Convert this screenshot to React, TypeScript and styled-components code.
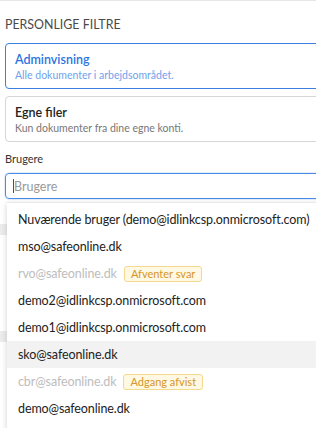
import React from "react";
import styled, { createGlobalStyle } from "styled-components";

const Global = createGlobalStyle`
  html, body { margin: 0; padding: 0; background: #fff; overflow: hidden; }
  body { font-family: "Lato", "Liberation Sans", sans-serif; }
`;

const Page = styled.div`
  position: relative;
  width: 316px;
  height: 428px;
  overflow: hidden;
  border-top: 1px solid #e6e6e6;
  box-sizing: border-box;
`;

const Content = styled.div`
  width: 340px;
  padding: 16px 0 0 5px;
  display: flex;
  flex-direction: column;
`;

const Heading = styled.div`
  font-size: 12.4px;
  color: #4a4a4a;
  height: 16px;
  line-height: 16px;
  margin-bottom: 10px;
`;

const Card = styled.div<{ $active?: boolean }>`
  border: 1px solid ${(p) => (p.$active ? "#3b7fe0" : "#d6d6d6")};
  border-radius: 4px;
  padding: 8px 9px 7px;
  margin-bottom: 7px;
  height: 29px;
`;

const CardTitle = styled.div<{ $active?: boolean }>`
  font-size: 12.5px;
  font-weight: 600;
  color: ${(p) => (p.$active ? "#2c74df" : "#222")};
  line-height: 16px;
`;

const CardSub = styled.div<{ $active?: boolean }>`
  font-size: 10.5px;
  color: ${(p) => (p.$active ? "#6fa2ec" : "#777")};
  line-height: 14px;
`;

const Label = styled.div`
  font-size: 11px;
  color: #333;
  margin-top: 3px;
  line-height: 14px;
`;

const Input = styled.div`
  margin-top: 7px;
  height: 24px;
  border: 1px solid #4a8be6;
  border-radius: 4px;
  box-shadow: 0 0 0 1px rgba(74, 139, 230, 0.15);
  display: flex;
  align-items: center;
  padding-left: 7px;
  font-size: 12.5px;
  color: #9a9a9a;
`;

const Caret = styled.span`
  display: inline-block;
  width: 1px;
  height: 14px;
  background: #1a4fd0;
`;

const BehindRow = styled.div<{ $top: number }>`
  position: absolute;
  left: 0;
  top: ${(p) => p.$top}px;
  width: 20px;
  height: 11px;
  background: #ececec;
`;

const Dropdown = styled.ul`
  position: absolute;
  left: 7px;
  top: 201px;
  width: 330px;
  margin: 0;
  padding: 3px 0 0;
  list-style: none;
  background: #fff;
  border-top: 1px solid #e8e8e8;
  box-shadow: 0 2px 6px rgba(0, 0, 0, 0.18);
  border-bottom: 1px solid #d4d4d4;
  height: 222px;
  box-sizing: content-box;
`;

const Item = styled.li<{ $disabled?: boolean; $hover?: boolean }>`
  height: 27px;
  display: flex;
  align-items: center;
  gap: 7px;
  padding-left: 11px;
  font-size: 12.5px;
  letter-spacing: -0.1px;
  color: ${(p) => (p.$disabled ? "#bdbdbd" : "#222")};
  background: ${(p) => (p.$hover ? "#f2f2f2" : "transparent")};
`;

const Badge = styled.span`
  font-size: 11px;
  letter-spacing: 0;
  color: #d6962a;
  background: #fff8e2;
  border: 1px solid #f3d88f;
  border-radius: 3px;
  padding: 0 6px;
  height: 14px;
  line-height: 14px;
`;

const BelowIcon = styled.div`
  position: absolute;
  left: 25px;
  top: 425px;
  width: 14px;
  height: 6px;
  background: #c0392b;
`;

const items: { t: string; d?: boolean; badge?: string; h?: boolean }[] = [
  { t: "Nuværende bruger (demo@idlinkcsp.onmicrosoft.com)" },
  { t: "mso@safeonline.dk" },
  { t: "rvo@safeonline.dk", d: true, badge: "Afventer svar" },
  { t: "demo2@idlinkcsp.onmicrosoft.com" },
  { t: "demo1@idlinkcsp.onmicrosoft.com" },
  { t: "sko@safeonline.dk", h: true },
  { t: "cbr@safeonline.dk", d: true, badge: "Adgang afvist" },
  { t: "demo@safeonline.dk" },
];

export default function App() {
  return (
    <Page>
      <Global />
      <Content>
        <Heading>PERSONLIGE FILTRE</Heading>
        <Card $active>
          <CardTitle $active>Adminvisning</CardTitle>
          <CardSub $active>Alle dokumenter i arbejdsområdet.</CardSub>
        </Card>
        <Card>
          <CardTitle>Egne filer</CardTitle>
          <CardSub>Kun dokumenter fra dine egne konti.</CardSub>
        </Card>
        <Label>Brugere</Label>
        <Input>
          <Caret />
          Brugere
        </Input>
      </Content>
      <BehindRow $top={223} />
      <BehindRow $top={330} />
      <BelowIcon />
      <Dropdown>
        {items.map((it) => (
          <Item key={it.t} $disabled={it.d} $hover={it.h}>
            {it.t}
            {it.badge && <Badge>{it.badge}</Badge>}
          </Item>
        ))}
      </Dropdown>
    </Page>
  );
}
